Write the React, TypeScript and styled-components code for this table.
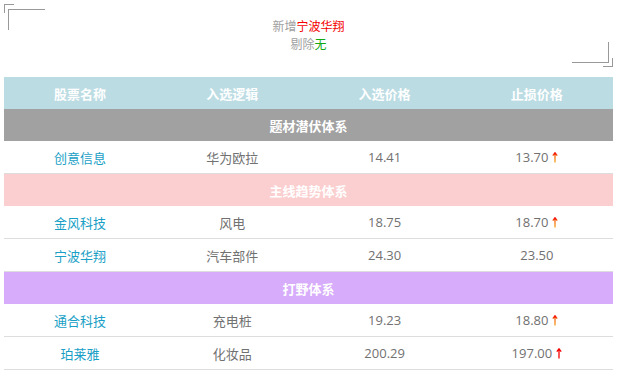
import styled, { createGlobalStyle } from 'styled-components'

const GlobalStyle = createGlobalStyle`
  body {
    margin: 0;
    padding: 4px;
    background: #fff;
    font-family: 'Open Sans', 'Noto Sans CJK SC', sans-serif;
  }
`

interface Stock {
  name: string
  logic: string
  price: string
  stop: string
  arrow?: 'mixed' | 'red'
}

interface Group {
  title: string
  color: string
  stocks: Stock[]
}

const groups: Group[] = [
  {
    title: '题材潜伏体系',
    color: '#a1a1a1',
    stocks: [{ name: '创意信息', logic: '华为欧拉', price: '14.41', stop: '13.70', arrow: 'mixed' }],
  },
  {
    title: '主线趋势体系',
    color: '#fbcfd0',
    stocks: [
      { name: '金风科技', logic: '风电', price: '18.75', stop: '18.70', arrow: 'mixed' },
      { name: '宁波华翔', logic: '汽车部件', price: '24.30', stop: '23.50' },
    ],
  },
  {
    title: '打野体系',
    color: '#d6acfb',
    stocks: [
      { name: '通合科技', logic: '充电桩', price: '19.23', stop: '18.80', arrow: 'mixed' },
      { name: '珀莱雅', logic: '化妆品', price: '200.29', stop: '197.00', arrow: 'red' },
    ],
  },
]

const UpArrow: React.FC<{ kind: 'mixed' | 'red'; id: string }> = ({ kind, id }) => (
  <ArrowSvg width="6" height="11" viewBox="0 0 6 11">
    <defs>
      <linearGradient id={id} x1="0" y1="0" x2="0" y2="1">
        <stop offset="0" stopColor="#f40000" />
        <stop offset="0.35" stopColor={kind === 'red' ? '#f40000' : '#f46a10'} />
        <stop offset="1" stopColor={kind === 'red' ? '#f40000' : '#f7a01c'} />
      </linearGradient>
    </defs>
    <path d="M3 10.5V1.2M0.8 3.6L3 0.8L5.2 3.6" fill="none" stroke={`url(#${id})`} strokeWidth="1.3" />
  </ArrowSvg>
)

export default function App() {
  return (
    <>
      <GlobalStyle />
      <Notice>
        <Corner $pos="tl-outer" />
        <Corner $pos="tl-inner" />
        <Corner $pos="br-inner" />
        <Corner $pos="br-outer" />
        <NoticeLine>
          新增<Added>宁波华翔</Added>
        </NoticeLine>
        <NoticeLine>
          剔除<Removed>无</Removed>
        </NoticeLine>
      </Notice>
      <Table>
        <thead>
          <HeadRow>
            <HeadCell>股票名称</HeadCell>
            <HeadCell>入选逻辑</HeadCell>
            <HeadCell>入选价格</HeadCell>
            <HeadCell>止损价格</HeadCell>
          </HeadRow>
        </thead>
        <tbody>
          {groups.map(group => [
            <SectionRow key={group.title} $color={group.color}>
              <SectionCell colSpan={4}>{group.title}</SectionCell>
            </SectionRow>,
            ...group.stocks.map(stock => (
              <DataRow key={stock.name}>
                <NameCell>{stock.name}</NameCell>
                <DataCell>{stock.logic}</DataCell>
                <DataCell>{stock.price}</DataCell>
                <DataCell>
                  {stock.stop}
                  {stock.arrow && <UpArrow kind={stock.arrow} id={`arrow-${stock.name}`} />}
                </DataCell>
              </DataRow>
            )),
          ])}
        </tbody>
      </Table>
    </>
  )
}

const Notice = styled.div`
  position: relative;
  height: 63px;
  margin-bottom: 10px;
  display: flex;
  flex-direction: column;
  align-items: center;
  justify-content: center;
  font-size: 12px;
  line-height: 18px;
  color: #a0a0a0;
`

const cornerStyles: Record<string, string> = {
  'tl-outer': 'top: 0; left: 0; width: 9px; height: 8px; border-top: 1px solid #999; border-left: 1px solid #999;',
  'tl-inner': 'top: 5px; left: 4px; width: 36px; height: 20px; border-top: 1px solid #999; border-left: 1px solid #999;',
  'br-inner': 'bottom: 4px; right: 4px; width: 36px; height: 20px; border-bottom: 1px solid #999; border-right: 1px solid #999;',
  'br-outer': 'bottom: 0; right: 0; width: 9px; height: 8px; border-bottom: 1px solid #999; border-right: 1px solid #999;',
}

const Corner = styled.span<{ $pos: string }>`
  position: absolute;
  ${props => cornerStyles[props.$pos]}
`

const NoticeLine = styled.div`
  white-space: nowrap;
`

const Added = styled.span`
  color: #f40000;
`

const Removed = styled.span`
  color: #12a812;
`

const Table = styled.table`
  width: 609px;
  border-collapse: collapse;
  table-layout: fixed;
  font-size: 13px;
`

const HeadRow = styled.tr`
  background: #bcdce3;
`

const HeadCell = styled.th`
  height: 32px;
  padding: 0;
  color: #fff;
  font-weight: bold;
  text-align: center;
`

const SectionRow = styled.tr<{ $color: string }>`
  background: ${props => props.$color};
`

const SectionCell = styled.td`
  height: 32px;
  padding: 0;
  color: #fff;
  font-weight: bold;
  text-align: center;
`

const DataRow = styled.tr`
  border-bottom: 1px solid #dddddd;
`

const DataCell = styled.td`
  height: 32px;
  padding: 0;
  color: #717171;
  text-align: center;
  white-space: nowrap;
`

const NameCell = styled(DataCell)`
  color: #1a9fc6;
`

const ArrowSvg = styled.svg`
  margin-left: 4px;
  vertical-align: -1px;
`
